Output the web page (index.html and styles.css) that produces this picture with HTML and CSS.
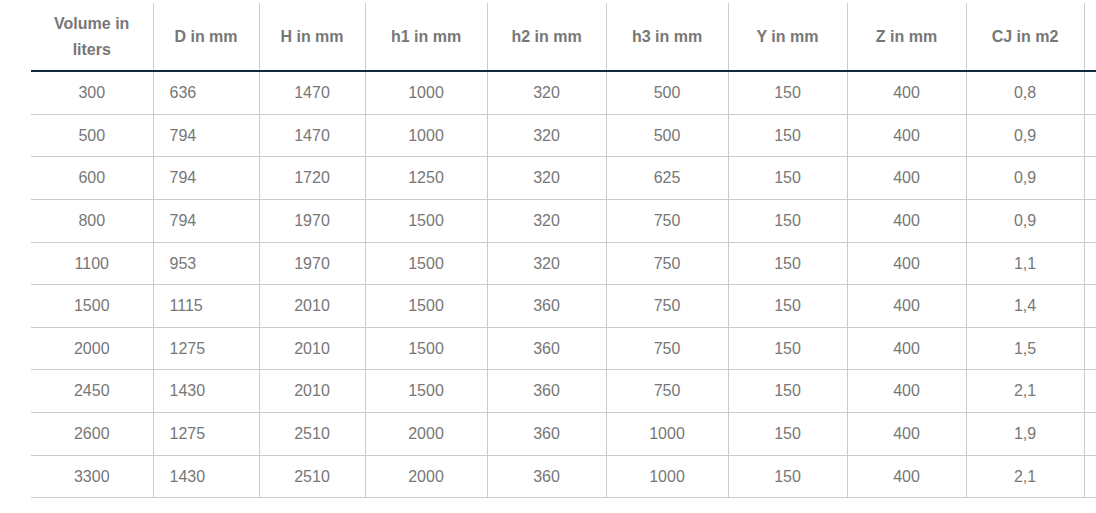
FILE: index.html
```html
<!DOCTYPE html>
<html>
<head>
<meta charset="utf-8">
<link rel="stylesheet" href="styles.css">
</head>
<body>
<div class="wrap">
<table class="spec">
<colgroup>
<col class="c1"><col class="c2"><col class="c3"><col class="c4"><col class="c5"><col class="c6"><col class="c7"><col class="c8"><col class="c9"><col class="c10">
</colgroup>
<thead>
<tr><th>Volume in liters</th><th>D in mm</th><th>H in mm</th><th>h1 in mm</th><th>h2 in mm</th><th>h3 in mm</th><th>Y in mm</th><th>Z in mm</th><th>CJ in m2</th><th></th></tr>
</thead>
<tbody>
<tr><td>300</td><td class="left">636</td><td>1470</td><td>1000</td><td>320</td><td>500</td><td>150</td><td>400</td><td>0,8</td><td></td></tr>
<tr><td>500</td><td class="left">794</td><td>1470</td><td>1000</td><td>320</td><td>500</td><td>150</td><td>400</td><td>0,9</td><td></td></tr>
<tr><td>600</td><td class="left">794</td><td>1720</td><td>1250</td><td>320</td><td>625</td><td>150</td><td>400</td><td>0,9</td><td></td></tr>
<tr><td>800</td><td class="left">794</td><td>1970</td><td>1500</td><td>320</td><td>750</td><td>150</td><td>400</td><td>0,9</td><td></td></tr>
<tr><td>1100</td><td class="left">953</td><td>1970</td><td>1500</td><td>320</td><td>750</td><td>150</td><td>400</td><td>1,1</td><td></td></tr>
<tr><td>1500</td><td class="left">1115</td><td>2010</td><td>1500</td><td>360</td><td>750</td><td>150</td><td>400</td><td>1,4</td><td></td></tr>
<tr><td>2000</td><td class="left">1275</td><td>2010</td><td>1500</td><td>360</td><td>750</td><td>150</td><td>400</td><td>1,5</td><td></td></tr>
<tr><td>2450</td><td class="left">1430</td><td>2010</td><td>1500</td><td>360</td><td>750</td><td>150</td><td>400</td><td>2,1</td><td></td></tr>
<tr><td>2600</td><td class="left">1275</td><td>2510</td><td>2000</td><td>360</td><td>1000</td><td>150</td><td>400</td><td>1,9</td><td></td></tr>
<tr><td>3300</td><td class="left">1430</td><td>2510</td><td>2000</td><td>360</td><td>1000</td><td>150</td><td>400</td><td>2,1</td><td></td></tr>
</tbody>
</table>
</div>
</body>
</html>
```
FILE: styles.css
```css
html, body {
  margin: 0;
  padding: 0;
  background: #fff;
  overflow: hidden;
}
.wrap {
  padding: 3px 0 0 31px;
  width: 1065px;
  overflow: hidden;
}
.spec {
  table-layout: fixed;
  border-collapse: collapse;
  width: 1171px;
  font-family: "Liberation Sans", Arial, sans-serif;
  font-size: 16px;
  line-height: 25.6px;
  color: #777;
}
.c1 { width: 122px; }
.c2 { width: 106px; }
.c3 { width: 106px; }
.c4 { width: 122px; }
.c5 { width: 119px; }
.c6 { width: 122px; }
.c7 { width: 119px; }
.c8 { width: 119px; }
.c9 { width: 118px; }
.c10 { width: 118px; }
.spec th, .spec td {
  padding: 8px 16px;
  text-align: center;
  vertical-align: middle;
  border-left: 1px solid #ccc;
}
.spec th:first-child, .spec td:first-child {
  border-left: none;
}
.spec th {
  font-weight: bold;
  color: #777;
  border-bottom: 2px solid #0e2a3c;
}
.spec td {
  border-bottom: 1px solid #ccc;
}
.spec td.left {
  text-align: left;
}
```
